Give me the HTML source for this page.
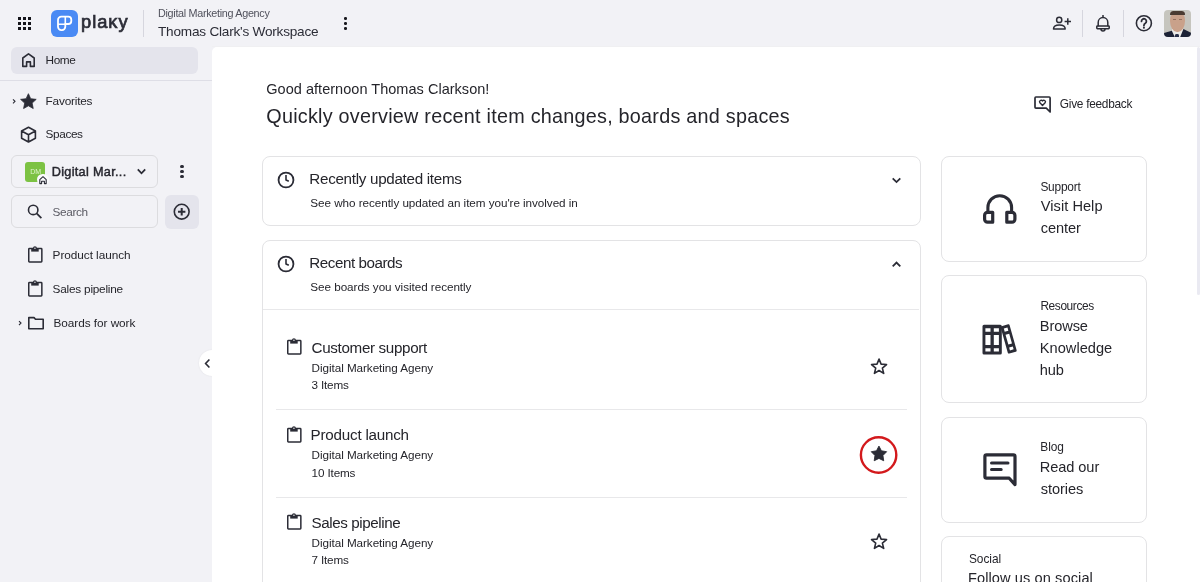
<!DOCTYPE html>
<html><head><meta charset="utf-8"><style>
html,body{margin:0;padding:0;}
body{width:1200px;height:582px;position:relative;overflow:hidden;background:#f2f2f6;font-family:"Liberation Sans", sans-serif;}
.t{position:absolute;white-space:nowrap;line-height:1;}
svg{overflow:visible}
</style></head><body>
<div id="root" style="position:absolute;left:0;top:0;width:1200px;height:582px;background:#f2f2f6;will-change:transform;overflow:hidden">
<div style="position:absolute;left:18px;top:17px;width:3px;height:3px;background:#16161c"></div>
<div style="position:absolute;left:18px;top:22px;width:3px;height:3px;background:#16161c"></div>
<div style="position:absolute;left:18px;top:27px;width:3px;height:3px;background:#16161c"></div>
<div style="position:absolute;left:23px;top:17px;width:3px;height:3px;background:#16161c"></div>
<div style="position:absolute;left:23px;top:22px;width:3px;height:3px;background:#16161c"></div>
<div style="position:absolute;left:23px;top:27px;width:3px;height:3px;background:#16161c"></div>
<div style="position:absolute;left:28px;top:17px;width:3px;height:3px;background:#16161c"></div>
<div style="position:absolute;left:28px;top:22px;width:3px;height:3px;background:#16161c"></div>
<div style="position:absolute;left:28px;top:27px;width:3px;height:3px;background:#16161c"></div>
<div style="position:absolute;left:51px;top:10px;width:27px;height:27px;background:#4a8af4;border-radius:6px"></div>
<svg style="position:absolute;left:51px;top:10px" width="27" height="27" viewBox="51 10 27 27">
<path d="M58 20 A3.3 3.3 0 0 1 61.3 16.7 H68.3 A3 3 0 0 1 71.3 19.7 V21 A3 3 0 0 1 68.3 24 H65.3 V26.8 A3.3 3.3 0 0 1 62 30.1 H61.3 A3.3 3.3 0 0 1 58 26.8 Z" fill="none" stroke="#fff" stroke-width="1.8" stroke-linejoin="round"/>
<path d="M58 24.2 H65.3 M65.3 16.7 V24.2" stroke="#fff" stroke-width="1.6" fill="none"/>
</svg>
<div class="t" style="left:81.00px;top:13px;font-size:18.3px;color:#2b2c36;font-weight:400;letter-spacing:0.991px;-webkit-text-stroke:0.7px #2b2c36">plaκy</div>
<div style="position:absolute;left:143px;top:10px;width:1px;height:27px;background:#d6d6de"></div>
<div class="t" style="left:158.00px;top:8px;font-size:10.8px;color:#50515c;font-weight:400;letter-spacing:-0.305px;">Digital Marketing Agency</div>
<div class="t" style="left:158.00px;top:25px;font-size:13.6px;color:#2b2c36;font-weight:400;letter-spacing:-0.215px;">Thomas Clark&#x27;s Workspace</div>
<div style="position:absolute;left:344.1px;top:17px;width:3.3px;height:3.1px;background:#18181e;border-radius:40%"></div>
<div style="position:absolute;left:344.1px;top:22px;width:3.3px;height:3.1px;background:#18181e;border-radius:40%"></div>
<div style="position:absolute;left:344.1px;top:27px;width:3.3px;height:3.1px;background:#18181e;border-radius:40%"></div>
<svg style="position:absolute;left:1050px;top:14px" width="24" height="18" viewBox="1050 14 24 18">
<circle cx="1059.2" cy="19.9" r="2.6" fill="none" stroke="#2b2c36" stroke-width="1.5"/>
<path d="M1053.5 29 C1053.5 26.2 1056 25 1059.3 25 C1062.6 25 1065.2 26.2 1065.2 29 Z" fill="none" stroke="#2b2c36" stroke-width="1.5" stroke-linejoin="round"/>
<path d="M1064.6 21.5 H1071 M1067.8 18.3 V24.7" stroke="#2b2c36" stroke-width="1.5"/>
</svg>
<div style="position:absolute;left:1082px;top:10px;width:1px;height:27px;background:#d6d6de"></div>
<svg style="position:absolute;left:1094px;top:13px" width="18" height="21" viewBox="1094 13 18 21">
<path d="M1103 15 V17.8" stroke="#2b2c36" stroke-width="1.5"/>
<path d="M1098.2 26.2 V22.4 A4.8 4.8 0 0 1 1107.8 22.4 V26.2" fill="none" stroke="#2b2c36" stroke-width="1.5"/>
<rect x="1096.8" y="26" width="12.4" height="2.7" rx="0.6" fill="none" stroke="#2b2c36" stroke-width="1.5"/>
<path d="M1101 29 A2 2 0 0 0 1105 29" fill="none" stroke="#2b2c36" stroke-width="1.5"/>
</svg>
<div style="position:absolute;left:1123px;top:10px;width:1px;height:27px;background:#d6d6de"></div>
<svg style="position:absolute;left:1134px;top:13px" width="20" height="20" viewBox="1134 13 20 20">
<circle cx="1143.9" cy="23.2" r="7.5" fill="none" stroke="#2b2c36" stroke-width="1.6"/>
<path d="M1141.5 21.4 A2.45 2.45 0 1 1 1145.3 23.3 C1144.3 23.9 1143.9 24.5 1143.9 25.7" fill="none" stroke="#2b2c36" stroke-width="1.8" stroke-linecap="round"/>
<circle cx="1143.9" cy="27.8" r="1.05" fill="#2b2c36"/>
</svg>
<div style="position:absolute;left:1164px;top:10px;width:27px;height:27px;border-radius:4px;overflow:hidden;background:#c6c5be">
<div style="position:absolute;left:8px;top:18px;width:11px;height:9px;background:#ecebe8"></div>
<div style="position:absolute;left:6px;top:1px;width:14.5px;height:20.5px;border-radius:50% 50% 48% 48%/45% 45% 55% 55%;background:#c9a18a"></div>
<div style="position:absolute;left:6px;top:0.7px;width:14.5px;height:4.5px;border-radius:7px 7px 1px 1px;background:#4a3b31"></div>
<div style="position:absolute;left:8.5px;top:9px;width:3px;height:1.4px;background:#7d5c4c;opacity:0.7"></div>
<div style="position:absolute;left:15px;top:9px;width:3px;height:1.4px;background:#7d5c4c;opacity:0.7"></div>
<div style="position:absolute;left:0;top:0;width:27px;height:27px;background:#1c2236;clip-path:polygon(0 85%,29% 77%,40% 100%,60% 100%,72% 70%,100% 84%,100% 100%,0 100%)"></div>
<div style="position:absolute;left:11.3px;top:24px;width:4px;height:3.5px;border-radius:40%;background:#28304a"></div>
</div>
<div style="position:absolute;left:11px;top:47px;width:187px;height:27px;background:#e4e4ec;border-radius:6px"></div>
<svg style="position:absolute;left:20px;top:51px" width="18" height="18" viewBox="20 51 18 18">
<path d="M22.8 58 L28.5 53.9 L34.2 58 V66.4 H30.4 V61.9 H26.6 V66.4 H22.8 Z" fill="none" stroke="#2b2c36" stroke-width="1.6" stroke-linejoin="round"/>
</svg>
<div class="t" style="left:45.60px;top:55px;font-size:11.8px;color:#25252b;font-weight:400;letter-spacing:-0.436px;">Home</div>
<div style="position:absolute;left:0px;top:80px;width:212px;height:1px;background:#dedee6"></div>
<svg style="position:absolute;left:10px;top:90px" width="30" height="22" viewBox="10 90 30 22">
<path d="M13 99.3 L15 101.3 L13 103.3" fill="none" stroke="#2b2c36" stroke-width="1.1"/>
<polygon points="28.40,93.70 30.69,98.74 36.20,99.37 32.11,103.11 33.22,108.53 28.40,105.80 23.58,108.53 24.69,103.11 20.60,99.37 26.11,98.74" fill="#2b2c36" stroke="#2b2c36" stroke-width="0.8" stroke-linejoin="round"/>
</svg>
<div class="t" style="left:45.60px;top:96px;font-size:11.8px;color:#25252b;font-weight:400;letter-spacing:-0.202px;">Favorites</div>
<svg style="position:absolute;left:18px;top:124px" width="21" height="21" viewBox="18 124 21 21">
<path d="M28.5 127.2 L35.4 131 V138.2 L28.5 142 L21.6 138.2 V131 Z M21.6 131 L28.5 134.7 L35.4 131 M28.5 134.7 V142" fill="none" stroke="#2b2c36" stroke-width="1.6" stroke-linejoin="round"/>
</svg>
<div class="t" style="left:45.60px;top:129px;font-size:11.8px;color:#25252b;font-weight:400;letter-spacing:-0.390px;">Spaces</div>
<div style="position:absolute;left:11px;top:155px;width:145px;height:31px;border:1px solid #dcdcdf;border-radius:6px"></div>
<div style="position:absolute;left:25px;top:161.7px;width:20px;height:20px;background:#7cc243;border-radius:3px"></div>
<div class="t" style="left:30.20px;top:168px;font-size:7px;color:#dff3cc;font-weight:400;letter-spacing:0.000px;">DM</div>
<div style="position:absolute;left:37.3px;top:174.1px;width:11.4px;height:11.4px;background:#fbfbfd;border-radius:50%"></div>
<svg style="position:absolute;left:37px;top:174px" width="12" height="12" viewBox="37 174 12 12">
<path d="M39.8 179.6 L43 176.7 L46.2 179.6 V183.6 H44.4 V181.2 H41.6 V183.6 H39.8 Z" fill="none" stroke="#2b2c36" stroke-width="1.1" stroke-linejoin="round"/>
</svg>
<div class="t" style="left:51.70px;top:166px;font-size:12.7px;color:#26262e;font-weight:400;letter-spacing:0.309px;-webkit-text-stroke:0.45px #26262e">Digital Mar...</div>
<svg style="position:absolute;left:135px;top:166px" width="13" height="12" viewBox="135 166 13 12">
<path d="M137.8 169.4 L141.5 173.3 L145.2 169.4" fill="none" stroke="#2b2c36" stroke-width="1.8"/>
</svg>
<div style="position:absolute;left:180.2px;top:164.6px;width:3.4px;height:3.4px;background:#2b2c36;border-radius:50%"></div>
<div style="position:absolute;left:180.2px;top:169.6px;width:3.4px;height:3.4px;background:#2b2c36;border-radius:50%"></div>
<div style="position:absolute;left:180.2px;top:174.6px;width:3.4px;height:3.4px;background:#2b2c36;border-radius:50%"></div>
<div style="position:absolute;left:11px;top:195px;width:145px;height:31px;border:1px solid #dcdcdf;border-radius:6px"></div>
<svg style="position:absolute;left:26px;top:204px" width="18" height="17" viewBox="26 204 18 17">
<circle cx="33.2" cy="209.9" r="4.7" fill="none" stroke="#2b2c36" stroke-width="1.6"/>
<path d="M36.6 213.3 L41.4 218.2" stroke="#2b2c36" stroke-width="1.7"/>
</svg>
<div class="t" style="left:52.60px;top:207px;font-size:11.8px;color:#5a5a63;font-weight:400;letter-spacing:-0.363px;">Search</div>
<div style="position:absolute;left:165px;top:195px;width:33.5px;height:33.5px;background:#e4e4ec;border-radius:6px"></div>
<svg style="position:absolute;left:171px;top:202px" width="22" height="20" viewBox="171 202 22 20">
<circle cx="181.7" cy="211.7" r="7.4" fill="none" stroke="#2b2c36" stroke-width="1.6"/>
<path d="M178 211.7 H185.4 M181.7 208 V215.4" stroke="#2b2c36" stroke-width="2"/>
</svg>
<svg style="position:absolute;left:27px;top:245.3px" width="18" height="19" viewBox="27 245.3 18 19">
<rect x="28.75" y="248.9" width="13.1" height="13.3" rx="0.7" fill="none" stroke="#2b2c36" stroke-width="1.5"/>
<path d="M31.2 248.60000000000002 H38.7 V251.9 H31.2 Z" fill="#2b2c36"/>
<circle cx="34.95" cy="248.4" r="1.95" fill="#2b2c36"/>
<circle cx="34.95" cy="248.60000000000002" r="0.7" fill="#f2f2f6"/>
</svg>
<div class="t" style="left:52.60px;top:250px;font-size:11.8px;color:#25252b;font-weight:400;letter-spacing:-0.057px;">Product launch</div>
<svg style="position:absolute;left:27px;top:278.6px" width="18" height="19" viewBox="27 278.6 18 19">
<rect x="28.75" y="282.20000000000005" width="13.1" height="13.3" rx="0.7" fill="none" stroke="#2b2c36" stroke-width="1.5"/>
<path d="M31.2 281.90000000000003 H38.7 V285.20000000000005 H31.2 Z" fill="#2b2c36"/>
<circle cx="34.95" cy="281.70000000000005" r="1.95" fill="#2b2c36"/>
<circle cx="34.95" cy="281.90000000000003" r="0.7" fill="#f2f2f6"/>
</svg>
<div class="t" style="left:52.60px;top:284px;font-size:11.8px;color:#25252b;font-weight:400;letter-spacing:-0.223px;">Sales pipeline</div>
<svg style="position:absolute;left:16px;top:314px" width="30" height="18" viewBox="16 314 30 18">
<path d="M19 321.2 L21 323.1 L19 325" fill="none" stroke="#2b2c36" stroke-width="1.1"/>
<path d="M28.8 317.6 H34 L35.5 319.3 H43.2 V328.8 H28.8 Z" fill="none" stroke="#2b2c36" stroke-width="1.6" stroke-linejoin="round"/>
</svg>
<div class="t" style="left:53.50px;top:318px;font-size:11.8px;color:#25252b;font-weight:400;letter-spacing:-0.051px;">Boards for work</div>
<div style="position:absolute;left:212px;top:46px;width:988px;height:1px;background:#f0f0f2"></div>
<div style="position:absolute;left:212px;top:47px;width:988px;height:535px;background:#ffffff;border-top-left-radius:5px"></div>
<div style="position:absolute;left:199px;top:350px;width:26px;height:26px;background:#fff;border-radius:50%;box-shadow:0 0 2px rgba(0,0,0,0.08);clip-path:inset(-4px 13px -4px -4px)"></div>
<svg style="position:absolute;left:202px;top:356px" width="11" height="14" viewBox="202 356 11 14">
<path d="M209.4 359.5 L205.6 363.5 L209.4 367.5" fill="none" stroke="#2b2c36" stroke-width="1.6"/>
</svg>
<div class="t" style="left:266.30px;top:82px;font-size:14.5px;color:#25252b;font-weight:400;letter-spacing:0.029px;">Good afternoon Thomas Clarkson!</div>
<div class="t" style="left:266.30px;top:107px;font-size:19.8px;color:#25252b;font-weight:400;letter-spacing:0.245px;">Quickly overview recent item changes, boards and spaces</div>
<svg style="position:absolute;left:1032px;top:94px" width="21" height="21" viewBox="1032 94 21 21">
<path d="M1050.1 112 L1046.3 108.2 H1035.9 A0.9 0.9 0 0 1 1035 107.3 V97.9 A0.9 0.9 0 0 1 1035.9 97 H1049.2 A0.9 0.9 0 0 1 1050.1 97.9 Z" fill="none" stroke="#2b2c36" stroke-width="1.7" stroke-linejoin="round"/>
<path d="M1042.5 105.4 L1039.9 102.8 A1.55 1.55 0 0 1 1042.5 100.9 A1.55 1.55 0 0 1 1045.1 102.8 Z" fill="none" stroke="#2b2c36" stroke-width="1.4" stroke-linejoin="round"/>
</svg>
<div class="t" style="left:1059.80px;top:99px;font-size:11.9px;color:#25252b;font-weight:400;letter-spacing:-0.281px;">Give feedback</div>
<div style="position:absolute;left:262px;top:156px;width:657px;height:68px;border:1px solid #e3e3e5;border-radius:8px;background:#fff"></div>
<svg style="position:absolute;left:276.4px;top:170.4px" width="20" height="20" viewBox="276.4 170.4 20 20">
<circle cx="286.4" cy="180.4" r="7.45" fill="none" stroke="#2b2c36" stroke-width="1.8"/>
<path d="M286.4 175.4 V180.4 L289.2 181.70000000000002" fill="none" stroke="#2b2c36" stroke-width="1.6" stroke-linejoin="round"/>
</svg>
<div class="t" style="left:309.30px;top:171px;font-size:15.2px;color:#25252b;font-weight:400;letter-spacing:-0.291px;">Recently updated items</div>
<div class="t" style="left:310.30px;top:197px;font-size:11.7px;color:#25252b;font-weight:400;letter-spacing:-0.048px;">See who recently updated an item you&#x27;re involved in</div>
<svg style="position:absolute;left:889px;top:174px" width="15" height="12" viewBox="889 174 15 12">
<path d="M892.7 178.4 L896.5 182.1 L900.3 178.4" fill="none" stroke="#2b2c36" stroke-width="1.8"/>
</svg>
<div style="position:absolute;left:262px;top:240px;width:657px;height:400px;border:1px solid #e3e3e5;border-radius:8px;background:#fff"></div>
<svg style="position:absolute;left:276.4px;top:254.2px" width="20" height="20" viewBox="276.4 254.2 20 20">
<circle cx="286.4" cy="264.2" r="7.45" fill="none" stroke="#2b2c36" stroke-width="1.8"/>
<path d="M286.4 259.2 V264.2 L289.2 265.5" fill="none" stroke="#2b2c36" stroke-width="1.6" stroke-linejoin="round"/>
</svg>
<div class="t" style="left:309.30px;top:255px;font-size:15.2px;color:#25252b;font-weight:400;letter-spacing:-0.449px;">Recent boards</div>
<div class="t" style="left:310.30px;top:281px;font-size:11.7px;color:#25252b;font-weight:400;letter-spacing:-0.042px;">See boards you visited recently</div>
<svg style="position:absolute;left:889px;top:258px" width="15" height="12" viewBox="889 258 15 12">
<path d="M892.7 266.3 L896.5 262.6 L900.3 266.3" fill="none" stroke="#2b2c36" stroke-width="1.8"/>
</svg>
<div style="position:absolute;left:263px;top:309px;width:656px;height:1px;background:#e8e8ea"></div>
<svg style="position:absolute;left:286px;top:337.4px" width="18" height="19" viewBox="286 337.4 18 19">
<rect x="287.75" y="341.0" width="13.1" height="13.3" rx="0.7" fill="none" stroke="#2b2c36" stroke-width="1.5"/>
<path d="M290.2 340.7 H297.7 V344.0 H290.2 Z" fill="#2b2c36"/>
<circle cx="293.95" cy="340.5" r="1.95" fill="#2b2c36"/>
<circle cx="293.95" cy="340.7" r="0.7" fill="#ffffff"/>
</svg>
<div class="t" style="left:311.60px;top:340px;font-size:15.2px;color:#25252b;font-weight:400;letter-spacing:-0.339px;">Customer support</div>
<div class="t" style="left:311.60px;top:362px;font-size:11.7px;color:#25252b;font-weight:400;letter-spacing:-0.054px;">Digital Marketing Ageny</div>
<div class="t" style="left:311.60px;top:379px;font-size:11.7px;color:#25252b;font-weight:400;letter-spacing:-0.180px;">3 Items</div>
<svg style="position:absolute;left:865px;top:354.70px" width="28" height="24" viewBox="865 354.70 28 24">
<polygon points="879.05,358.80 881.11,363.87 886.56,364.26 882.38,367.78 883.69,373.09 879.05,370.20 874.41,373.09 875.72,367.78 871.54,364.26 876.99,363.87" fill="none" stroke="#2b2c36" stroke-width="1.6" stroke-linejoin="round"/>
</svg>
<div style="position:absolute;left:276px;top:409.2px;width:631px;height:1px;background:#e8e8ea"></div>
<svg style="position:absolute;left:286px;top:424.9px" width="18" height="19" viewBox="286 424.9 18 19">
<rect x="287.75" y="428.5" width="13.1" height="13.3" rx="0.7" fill="none" stroke="#2b2c36" stroke-width="1.5"/>
<path d="M290.2 428.2 H297.7 V431.5 H290.2 Z" fill="#2b2c36"/>
<circle cx="293.95" cy="428.0" r="1.95" fill="#2b2c36"/>
<circle cx="293.95" cy="428.2" r="0.7" fill="#ffffff"/>
</svg>
<div class="t" style="left:310.60px;top:427px;font-size:15.2px;color:#25252b;font-weight:400;letter-spacing:-0.221px;">Product launch</div>
<div class="t" style="left:311.60px;top:449px;font-size:11.7px;color:#25252b;font-weight:400;letter-spacing:-0.054px;">Digital Marketing Ageny</div>
<div class="t" style="left:311.60px;top:467px;font-size:11.7px;color:#25252b;font-weight:400;letter-spacing:-0.140px;">10 Items</div>
<svg style="position:absolute;left:855px;top:429.70px" width="48" height="48" viewBox="855 429.70 48 48">
<circle cx="878.6" cy="454.70" r="17.7" fill="none" stroke="#d3191c" stroke-width="2.4"/>
<polygon points="878.95,445.80 881.42,450.50 886.65,451.40 882.94,455.20 883.71,460.45 878.95,458.10 874.19,460.45 874.96,455.20 871.25,451.40 876.48,450.50" fill="#2b2c36" stroke="#2b2c36" stroke-width="0.9" stroke-linejoin="round"/>
</svg>
<div style="position:absolute;left:276px;top:497.1px;width:631px;height:1px;background:#e8e8ea"></div>
<svg style="position:absolute;left:286px;top:512.4px" width="18" height="19" viewBox="286 512.4 18 19">
<rect x="287.75" y="516.0" width="13.1" height="13.3" rx="0.7" fill="none" stroke="#2b2c36" stroke-width="1.5"/>
<path d="M290.2 515.6999999999999 H297.7 V519.0 H290.2 Z" fill="#2b2c36"/>
<circle cx="293.95" cy="515.5" r="1.95" fill="#2b2c36"/>
<circle cx="293.95" cy="515.6999999999999" r="0.7" fill="#ffffff"/>
</svg>
<div class="t" style="left:311.60px;top:515px;font-size:15.2px;color:#25252b;font-weight:400;letter-spacing:-0.417px;">Sales pipeline</div>
<div class="t" style="left:311.60px;top:537px;font-size:11.7px;color:#25252b;font-weight:400;letter-spacing:-0.054px;">Digital Marketing Ageny</div>
<div class="t" style="left:311.60px;top:554px;font-size:11.7px;color:#25252b;font-weight:400;letter-spacing:-0.180px;">7 Items</div>
<svg style="position:absolute;left:865px;top:529.70px" width="28" height="24" viewBox="865 529.70 28 24">
<polygon points="879.05,533.80 881.11,538.87 886.56,539.26 882.38,542.78 883.69,548.09 879.05,545.20 874.41,548.09 875.72,542.78 871.54,539.26 876.99,538.87" fill="none" stroke="#2b2c36" stroke-width="1.6" stroke-linejoin="round"/>
</svg>
<div style="position:absolute;left:941px;top:156px;width:204px;height:104px;border:1px solid #e3e3e5;border-radius:8px;background:#fff"></div>
<svg style="position:absolute;left:980px;top:191px" width="40" height="36" viewBox="980 191 40 36">
<path d="M987.9 213 V207.5 A11.85 11.85 0 0 1 1011.6 207.5 V213" fill="none" stroke="#2b2c36" stroke-width="3.1"/>
<path d="M992.7 212.3 H987.6 A3 3 0 0 0 984.6 215.3 V219.3 A2.9 2.9 0 0 0 987.5 222.2 H992.7 Z" fill="none" stroke="#2b2c36" stroke-width="3.2" stroke-linejoin="round"/>
<path d="M1006.8 212.3 H1011.9 A3 3 0 0 1 1014.9 215.3 V219.3 A2.9 2.9 0 0 1 1012 222.2 H1006.8 Z" fill="none" stroke="#2b2c36" stroke-width="3.2" stroke-linejoin="round"/>
</svg>
<div class="t" style="left:1040.40px;top:182px;font-size:11.9px;color:#25252b;font-weight:400;letter-spacing:-0.224px;">Support</div>
<div class="t" style="left:1040.80px;top:199px;font-size:14.6px;color:#25252b;font-weight:400;letter-spacing:0.038px;">Visit Help</div>
<div class="t" style="left:1040.80px;top:221px;font-size:14.6px;color:#25252b;font-weight:400;letter-spacing:-0.081px;">center</div>
<div style="position:absolute;left:941px;top:275px;width:204px;height:126px;border:1px solid #e3e3e5;border-radius:8px;background:#fff"></div>
<svg style="position:absolute;left:979px;top:321px" width="42" height="37" viewBox="979 321 42 37">
<path fill-rule="evenodd" fill="#2b2c36" d="M984 324.8 H1000.3 A1.5 1.5 0 0 1 1001.8 326.3 V353 A1.5 1.5 0 0 1 1000.3 354.5 H984 A1.5 1.5 0 0 1 982.5 353 V326.3 A1.5 1.5 0 0 1 984 324.8 Z M985.4 328.2 H990.5 V331.7 H985.4 Z M993.8 328.2 H998.9 V331.7 H993.8 Z M985.4 335.1 H990.5 V345 H985.4 Z M993.8 335.1 H998.9 V345 H993.8 Z M985.4 348.2 H990.5 V351.5 H985.4 Z M993.8 348.2 H998.9 V351.5 H993.8 Z"/>
<g transform="rotate(-15.7 1008.7 338.9)">
<path fill-rule="evenodd" fill="#2b2c36" d="M1005.3 324.7 H1012.1 A1.2 1.2 0 0 1 1013.3 325.9 V351.9 A1.2 1.2 0 0 1 1012.1 353.1 H1005.3 A1.2 1.2 0 0 1 1004.1 351.9 V325.9 A1.2 1.2 0 0 1 1005.3 324.7 Z M1006.8 327.6 H1010.6 V330.9 H1006.8 Z M1006.8 334 H1010.6 V344.3 H1006.8 Z M1006.8 347.3 H1010.6 V350.3 H1006.8 Z"/>
</g>
</svg>
<div class="t" style="left:1040.40px;top:301px;font-size:11.9px;color:#25252b;font-weight:400;letter-spacing:-0.386px;">Resources</div>
<div class="t" style="left:1039.80px;top:319px;font-size:14.6px;color:#25252b;font-weight:400;letter-spacing:-0.095px;">Browse</div>
<div class="t" style="left:1039.80px;top:341px;font-size:14.6px;color:#25252b;font-weight:400;letter-spacing:0.025px;">Knowledge</div>
<div class="t" style="left:1039.80px;top:363px;font-size:14.6px;color:#25252b;font-weight:400;letter-spacing:-0.116px;">hub</div>
<div style="position:absolute;left:941px;top:417px;width:204px;height:104px;border:1px solid #e3e3e5;border-radius:8px;background:#fff"></div>
<svg style="position:absolute;left:980px;top:450px" width="40" height="40" viewBox="980 450 40 40">
<path d="M1015 484.6 L1009.2 478.2 H986.5 A1.6 1.6 0 0 1 984.9 476.6 V456.4 A1.6 1.6 0 0 1 986.5 454.8 H1013.4 A1.6 1.6 0 0 1 1015 456.4 Z" fill="none" stroke="#2b2c36" stroke-width="3.2" stroke-linejoin="round"/>
<path d="M991.5 463 H1008 M991.5 469.6 H1001.2" stroke="#2b2c36" stroke-width="3" stroke-linecap="round"/>
</svg>
<div class="t" style="left:1040.30px;top:442px;font-size:11.9px;color:#25252b;font-weight:400;letter-spacing:-0.077px;">Blog</div>
<div class="t" style="left:1039.80px;top:460px;font-size:14.6px;color:#25252b;font-weight:400;letter-spacing:-0.085px;">Read our</div>
<div class="t" style="left:1040.80px;top:482px;font-size:14.6px;color:#25252b;font-weight:400;letter-spacing:-0.071px;">stories</div>
<div style="position:absolute;left:941px;top:536px;width:204px;height:100px;border:1px solid #e3e3e5;border-radius:8px;background:#fff"></div>
<div class="t" style="left:969.00px;top:554px;font-size:11.9px;color:#25252b;font-weight:400;letter-spacing:-0.063px;">Social</div>
<div class="t" style="left:968.00px;top:571px;font-size:14.6px;color:#25252b;font-weight:400;letter-spacing:0.086px;">Follow us on social</div>
<div style="position:absolute;left:1197px;top:47px;width:3px;height:248px;background:#eaeaf2;border-radius:2px"></div>
</div>
</body></html>
